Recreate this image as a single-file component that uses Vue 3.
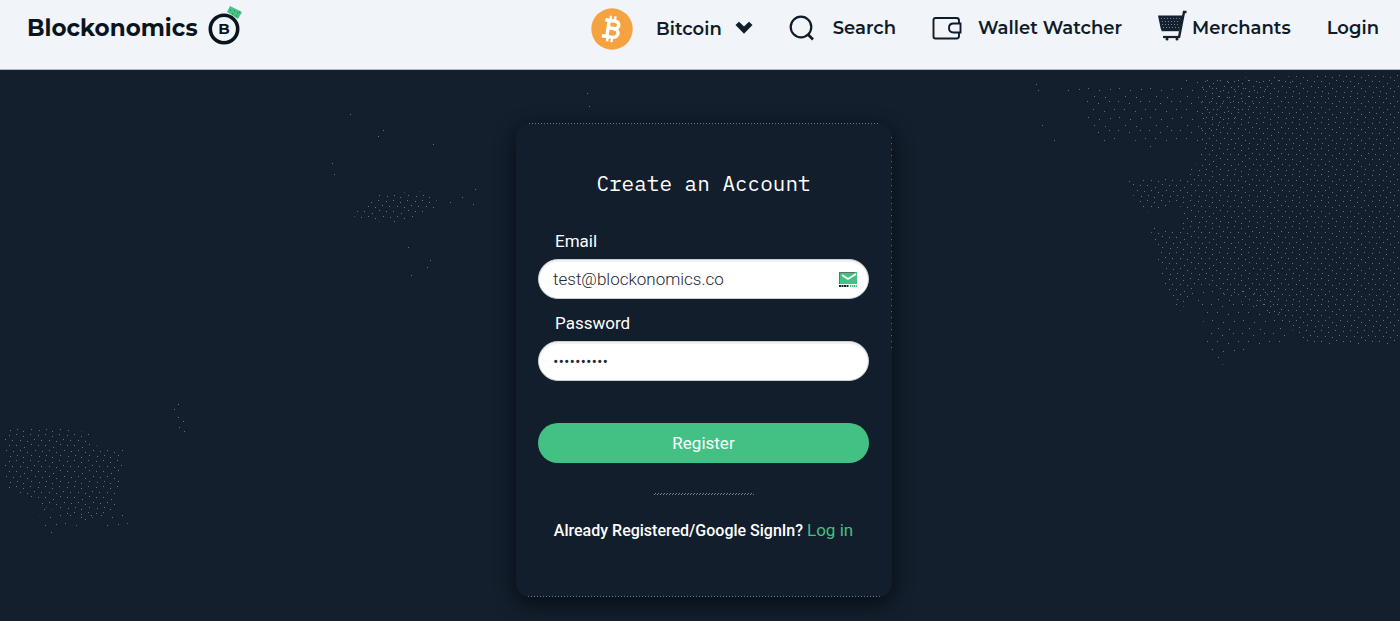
<script setup>
import { ref } from 'vue'

const email = ref('test@blockonomics.co')
const password = ref('blockchain')
</script>

<template>
  <div class="page">
    <header class="topbar">
      <a class="brand" href="#">
        <span>Blockonomics</span>
        <svg class="brand-mark" width="36" height="42" viewBox="0 0 36 42" aria-hidden="true">
          <circle cx="16" cy="25" r="13.7" fill="none" stroke="#0a141e" stroke-width="3.6" />
          <path d="M22 2 34 8 30 15 19 8z" fill="#45c284" />
          <path d="M22 6h1M26 7h1M24 10h1M29 9h1M28 12h1M31 8h1" stroke="#2b7252" />
          <text x="16" y="30" text-anchor="middle" class="mark-letter">B</text>
        </svg>
      </a>
      <nav class="nav">
        <button class="item coin" type="button" aria-haspopup="true">
          <svg width="42" height="42" viewBox="0 0 42 42" aria-hidden="true">
            <circle cx="21" cy="21" r="20.7" fill="#f5a340" />
            <g transform="rotate(9 21 21)" fill="none" stroke="#fff">
              <path d="M17 13v16M13 12.8h10c5.500 0 5.500 7.500 0 7.500h-5M22 20.300c7.500 0 7.500 8.900 0 8.900h-10" stroke-width="3.500" />
              <path d="M18 8v5M22.500 8v5M18 29v5M22.500 29v5" stroke-width="2.400" />
            </g>
          </svg>
          <span>Bitcoin</span>
          <svg class="chevron" width="18" height="14" viewBox="0 0 18 14" aria-hidden="true">
            <path d="M.5 4 4 .8l5 4.700L14 .8 17.500 4 9 12.800z" fill="#101d2b" />
          </svg>
        </button>
        <a class="item search" href="#">
          <svg width="26" height="26" viewBox="0 0 26 26" fill="none" stroke="#0f1b28" stroke-width="2.200" aria-hidden="true">
            <circle cx="12" cy="12" r="10.300" />
            <path d="m18.500 19 5.500 5.500" stroke-width="2.600" />
          </svg>
          <span>Search</span>
        </a>
        <a class="item wallet" href="#">
          <svg width="30" height="24" viewBox="0 0 30 24" fill="none" stroke="#0f1b28" stroke-width="1.900" aria-hidden="true">
            <path d="M27 7V4.500Q27 2 24.500 2H3.500Q1.500 2 1.500 4V20.500Q1.500 22.500 3.500 22.500H24.500Q27 22.500 27 20V17" />
            <path d="M28.500 7.500H21.500Q17 7.500 17 12T21.500 16.500H28.500z" />
          </svg>
          <span>Wallet Watcher</span>
        </a>
        <a class="item cart" href="#">
          <svg width="30" height="36" viewBox="0 0 30 36" aria-hidden="true">
            <path d="M0 5.500H25.500L21.500 20H4Q3 20 2.700 18.500z" fill="#15212e" />
            <path d="M28.500 2H26L21 27.500" fill="none" stroke="#15212e" stroke-width="2.400" />
            <path d="M3.500 20.500H21" stroke="#15212e" stroke-width="1.400" />
            <path d="M3 8.500h20M4 11.500h18M4 14.500h18M5 17.500h16" stroke="#71808e" stroke-dasharray="1 2" />
            <path d="M5 27H22" stroke="#15212e" stroke-width="2.200" />
            <circle cx="9" cy="29" r="1.500" fill="#15212e" />
            <circle cx="19" cy="29" r="1.500" fill="#15212e" />
          </svg>
          <span>Merchants</span>
        </a>
        <a class="item" href="#">Login</a>
      </nav>
    </header>

    <main class="stage">
      <svg class="map" viewBox="0 0 1400 551" preserveAspectRatio="xMidYMin slice" aria-hidden="true">
        <defs>
          <pattern id="dots" width="29" height="26" patternUnits="userSpaceOnUse">
            <path d="M1 .5h1M9 1.500h1M16 .5h1M23 2.500h1M5 5.500h1M12 6.500h1M20 6.500h1M27 7.500h1M2 10.500h1M9 11.500h1M16 11.500h1M24 13.500h1M6 16.500h1M13 17.500h1M20 16.500h1M27 18.500h1M2 21.500h1M10 22.500h1M17 21.500h1M23 23.500h1" stroke="#66727b" />
          </pattern>
          <pattern id="sparse" width="31" height="29" patternUnits="userSpaceOnUse">
            <path d="M2 2.500h1M13 4.500h1M24 2.500h1M8 10.500h1M19 12.500h1M29 10.500h1M3 18.500h1M14 20.500h1M25 19.500h1M9 26.500h1M20 27.500h1" stroke="#66727b" />
          </pattern>
        </defs>
        <path fill="url(#sparse)" d="M1058 19 1088 11 1136 19 1172 13 1200 6 1300 7 1200 73 1178 73 1150 81 1130 67 1097 74 1086 54 1084 28z" />
        <path fill="url(#dots)" d="M1200 9 1400 3V276L1310 276 1275 245 1200 215 1180 241 1168 225 1158 193 1150 157 1183 162 1180 133 1145 142 1123 111 1183 108 1200 90z" />
        <path fill="url(#sparse)" d="M1180 218 1275 218 1290 278 1235 282 1220 297 1205 275 1203 245z" />
        <path fill="url(#dots)" d="M3 359 64 359 90 363 93 375 124 380 121 405 114 440 86 450 45 437 20 424 3 416z" />
        <path fill="url(#sparse)" d="M45 437 82 445 119 438 132 461 125 467 90 450 53 466 34 455z" />
        <path fill="url(#dots)" d="M352 145 380 124 430 121 441 137 402 153 360 150z" />
        <path d="M450 132.500h1M462 127.500h1M475 119.500h1M473 134.500h1M383 60.500h1M378 66.500h1M350 44.500h1M433 74.500h1M332 93.500h1M334 104.500h1M430 190.500h1M427 197.500h1M411 205.500h1M408 177.500h1M587 23.500h1M589 36.500h1M178 334.500h1M174 339.500h1M178 347.500h1M183 351.500h1M179 357.500h1M184 361.500h1M1036 14.500h1M1038 20.500h1M1042 55.500h1M1054 70.500h1" stroke="#67737c" />
      </svg>

      <form class="card" @submit.prevent>
        <h1>Create an Account</h1>
        <label for="email">Email</label>
        <div class="field">
          <input id="email" v-model="email" type="email" autocomplete="off" />
          <svg class="mail" width="20" height="16" viewBox="0 0 20 16" aria-hidden="true">
            <path d="M1 0h18v12H1z" fill="#43c184" />
            <path d="M1.500 12V.5H17" fill="none" stroke="#5c7069" />
            <path d="m4 3 6 4 8-5" fill="none" stroke="#fff" stroke-width="1.700" />
            <path d="M1 14h10" stroke="#17222e" stroke-width="2" stroke-dasharray="2 .5" />
            <path d="M12 14h7" stroke="#43c184" stroke-width="2" stroke-dasharray="1.500 .5" />
          </svg>
        </div>
        <label for="password">Password</label>
        <div class="field">
          <input id="password" v-model="password" type="password" autocomplete="off" />
        </div>
        <button class="register" type="submit">Register</button>
        <hr />
        <p class="footnote">Already Registered/Google SignIn? <a href="#">Log in</a></p>
      </form>
    </main>
  </div>
</template>

<style>
body {
  background: #141f2d;
}
</style>

<style scoped>
.page {
  min-height: 100vh;
  display: flex;
  flex-direction: column;
  overflow: hidden;
  background: #141f2d;
  font-family: Roboto, "Liberation Sans", sans-serif;
}

.page * {
  box-sizing: border-box;
}

.topbar {
  display: flex;
  justify-content: space-between;
  align-items: flex-start;
  padding: 4px 21px 9px 27px;
  min-height: 70px;
  background: #f1f4f9;
  border-bottom: 1px solid #b3b8be;
  color: #101b28;
  font-family: Montserrat, Inter, "Open Sans", sans-serif;
}

.brand {
  display: flex;
  align-items: center;
  gap: 10px;
  color: #0a141e;
  font-size: 23px;
  font-weight: 700;
  line-height: 32px;
  text-decoration: none;
}

.brand span {
  padding-top: 6px;
}

.mark-letter {
  font-size: 15px;
  font-weight: 700;
  fill: #0a141e;
}

.nav {
  display: flex;
  align-items: center;
  gap: 36px;
  height: 48px;
}

.item {
  display: flex;
  align-items: center;
  padding: 0;
  border: 0;
  background: none;
  color: #101b28;
  font-family: inherit;
  font-size: 18px;
  font-weight: 600;
  line-height: 24px;
  text-decoration: none;
  white-space: nowrap;
}

.coin {
  gap: 23px;
  padding-top: 2px;
}

.chevron {
  margin: 0 0 2px -10px;
}

.search {
  gap: 18px;
}

.wallet {
  gap: 16px;
}

.cart {
  gap: 4px;
}

.stage {
  flex: 1;
  display: grid;
  justify-items: center;
  align-items: start;
}

.map,
.card {
  grid-area: 1 / 1;
}

.map {
  width: 100%;
}

.card {
  z-index: 1;
  display: flex;
  flex-direction: column;
  width: 376px;
  margin: 53px 0 20px 8px;
  padding: 45px 23px 55px 22px;
  border-radius: 14px;
  background:
    repeating-linear-gradient(90deg, #6a757e 0 1px, transparent 1px 3px) 50% 0 / 350px 1px no-repeat,
    repeating-linear-gradient(90deg, #6a757e 0 1px, transparent 1px 3px) 50% 100% / 352px 1px no-repeat,
    repeating-linear-gradient(180deg, #5d6871 0 1px, transparent 1px 6px) 100% 14px / 1px 212px no-repeat,
    #121e2b;
  box-shadow: 0 6px 18px 2px #080f17;
  color: #fff;
  font-size: 17px;
}

h1 {
  margin: 0 0 32px;
  font-family: "IBM Plex Mono", "Liberation Mono", monospace;
  font-size: 21px;
  font-weight: 400;
  line-height: 30px;
  text-align: center;
}

label {
  align-self: flex-start;
  margin-left: 17px;
  line-height: 22px;
}

.field {
  position: relative;
  margin: 7px 0 13px;
}

input {
  display: block;
  width: 100%;
  height: 40px;
  padding: 0 40px 0 14px;
  border: 1px solid #c9ced4;
  border-radius: 20px;
  background: #fff;
  box-shadow: inset 0 2px 1px #eef1f5;
  color: #1c2733;
  font-family: inherit;
  font-size: 17px;
  font-weight: 300;
  outline: none;
}

.mail {
  position: absolute;
  right: 11px;
  top: 13px;
}

.register {
  height: 40px;
  margin-top: 29px;
  border: 0;
  border-radius: 20px;
  background: #43c184;
  color: #fff;
  font-family: inherit;
  font-size: 17px;
}

hr {
  width: 100px;
  height: 2px;
  margin: 30px auto 24px;
  border: 0;
  background:
    repeating-linear-gradient(90deg, #77828a 0 1px, transparent 1px 3px) 1px 0 / 100% 1px no-repeat,
    repeating-linear-gradient(90deg, #77828a 0 1px, transparent 1px 3px) 0 1px / 100% 1px no-repeat;
}

.footnote {
  margin: 0;
  font-size: 16px;
  font-weight: 500;
  line-height: 22px;
  text-align: center;
  white-space: nowrap;
}

.footnote a {
  color: #43c184;
  font-size: 17px;
  font-weight: 400;
  text-decoration: none;
}
</style>
